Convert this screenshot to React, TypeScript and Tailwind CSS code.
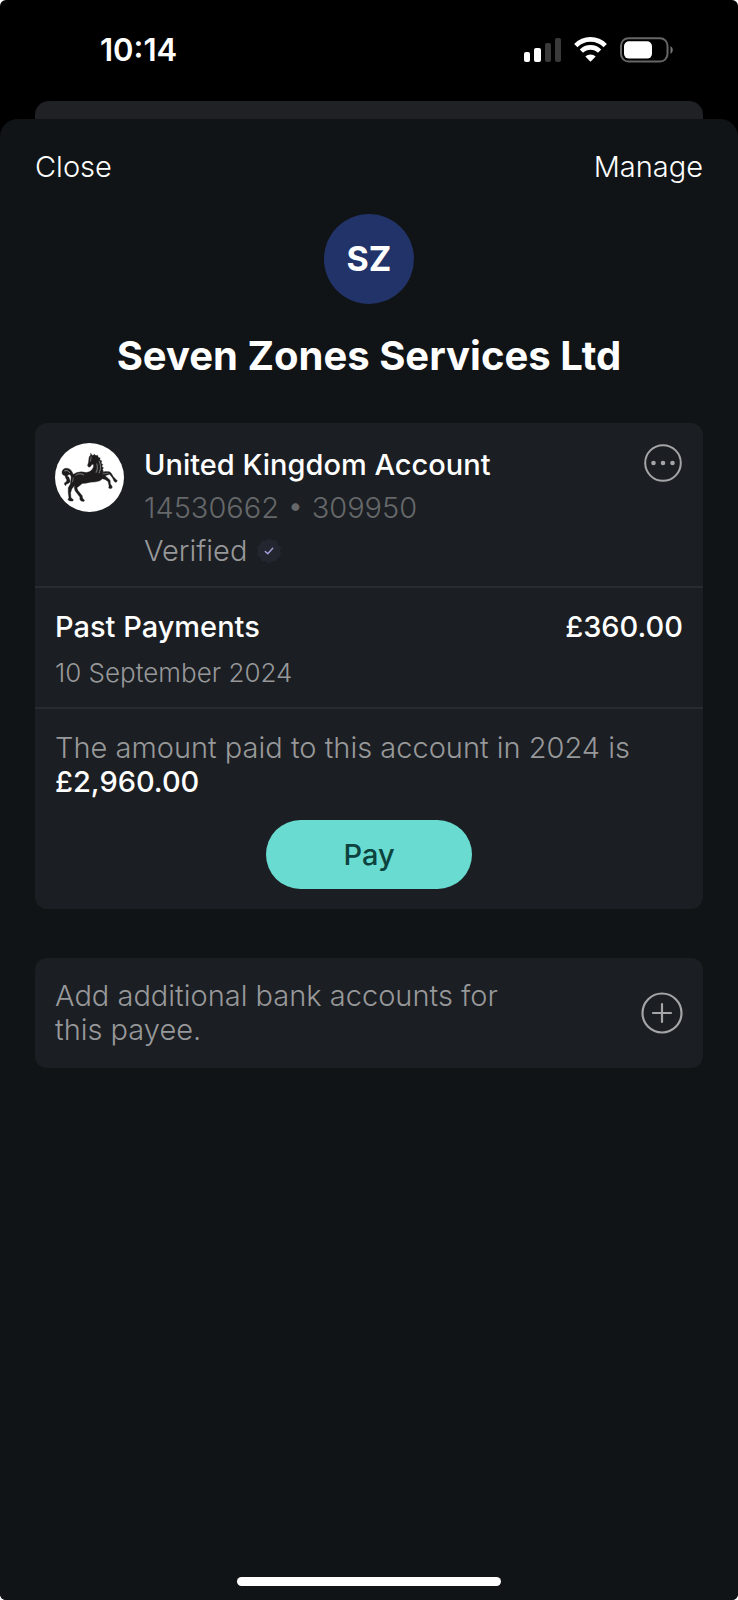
import React from "react";

function StatusIcons() {
  return (
    <svg viewBox="0 0 152 26" className="h-[26px] w-[152px]" aria-hidden="true">
      <rect x="1" y="15" width="6" height="10" rx="2" fill="#fff" />
      <rect x="11" y="11" width="7" height="14" rx="2" fill="#fff" />
      <rect x="22" y="6" width="6" height="19" rx="2" fill="#3a3a3a" />
      <rect x="32" y="1" width="6" height="24" rx="2" fill="#3a3a3a" />
      <g fill="none" stroke="#fff" strokeWidth="4.6">
        <path d="M52.8 8.6 A20.5 20.5 0 0 1 82.2 8.6" />
        <path d="M58.4 14.2 A12.8 12.8 0 0 1 76.6 14.2" />
      </g>
      <path d="M67.5 24.8 L62.3 19.6 A7.4 7.4 0 0 1 72.7 19.6 Z" fill="#fff" />
      <rect x="98" y="1.2" width="46.5" height="23.4" rx="7.5" fill="none" stroke="#666" strokeWidth="2" />
      <rect x="101" y="4.2" width="28" height="17.4" rx="5" fill="#fff" />
      <path d="M147.5 9 a4.6 4.6 0 0 1 0 8 z" fill="#777" />
    </svg>
  );
}

function HorseLogo() {
  return (
    <svg viewBox="15 23 208 208" className="size-[69px] shrink-0" role="img" aria-label="Black horse">
      <circle cx="119" cy="127" r="104" fill="#fff" />
      <g fill="#1d1b1c" stroke="#1d1b1c" strokeLinejoin="round" strokeLinecap="round" strokeWidth="1.2">
        <path d="M123 54 L126 59 L129 61 L134 57 L138 61 L144 61 L145 66 L151 68 L150 74 L156 77 L154 83 L159 88 L156 93 L161 98 L158 103 L161 108 L158 112 L166 109 L180 110 L185 115 L191 125 L198 132 L203 137 L199 142 L193 138 L189 129 L180 117 L166 122 L173 128 L181 135 L182 146 L188 156 L184 161 L177 159 L178 152 L175 139 L166 133 L158 131 L150 137 L138 140 L122 141 L108 144 L97 145 L90 151 L81 158 L84 166 L97 182 L98 189 L104 196 L102 199 L94 198 L90 193 L90 186 L76 168 L73 158 L74 151 L66 161 L62 173 L63 187 L70 194 L69 198 L60 198 L54 194 L57 188 L55 173 L55 158 L61 147 L63 135 L64 124 L71 117 L81 112 L94 110 L110 112 L120 109 L127 103 L131 95 L131 87 L126 88 L122 94 L117 96 L113 91 L116 82 L117 73 L118 65 L122 60 Z" />
        <path d="M71 120 C67 110 64 104 58 101 C50 98 42 99 38 105 C34 111 36 119 43 121 C47 122 46 127 48 130 C52 134 51 139 47 141 C42 143 42 147 47 152 C47 145 57 147 60 140 C62 133 56 130 57 125 C51 127 51 121 57 118 C61 117 63 122 66 128 Z" />
      </g>
      <g fill="none" stroke="#8b8b8b" strokeWidth="3" strokeLinecap="round">
        <path d="M148 78 C153 88 154 101 148 113" />
        <path d="M141 86 C144 95 144 103 139 111" strokeWidth="4" stroke="#666" />
        <path d="M78 120 C84 115 94 114 101 119" />
        <path d="M44 107 C50 104 56 107 59 112" />
        <path d="M124 65 L122 78" stroke="#777" />
        <path d="M160 116 L175 114" stroke="#666" />
        <path d="M70 128 L68 140" stroke="#666" />
      </g>
    </svg>
  );
}

function VerifiedBadge() {
  return (
    <svg viewBox="0 0 28 28" className="size-7" aria-hidden="true">
      <path
        fill="#23252f"
        d="M14 1 L17.4 3.6 L21.6 3.5 L22.8 7.5 L26.3 10 L25 14 L26.3 18 L22.8 20.5 L21.6 24.5 L17.4 24.4 L14 27 L10.6 24.4 L6.4 24.5 L5.2 20.5 L1.7 18 L3 14 L1.7 10 L5.2 7.5 L6.4 3.5 L10.6 3.6 Z"
      />
      <path d="M10.3 14.4 L12.8 16.8 L17.7 11.2" fill="none" stroke="#a3a0dc" strokeWidth="1.4" strokeLinecap="round" strokeLinejoin="round" />
    </svg>
  );
}

export default function App() {
  return (
    <div className="min-h-screen bg-white font-['Inter','Liberation_Sans',sans-serif]">
      <div className="flex min-h-screen flex-col overflow-hidden rounded-md bg-black">
        <header className="flex h-[101px] shrink-0 items-center justify-between pr-[63px] pb-px pl-[100px] text-[31px] leading-9 font-semibold text-white">
          <time>10:14</time>
          <StatusIcons />
        </header>
        <div className="mx-[35px] h-[18px] shrink-0 rounded-t-[14px] bg-[#202124]" />

        <main className="flex grow flex-col rounded-t-[18px] bg-[#111416] px-[35px] text-[29px] leading-[34px] text-white">
          <nav className="flex justify-between pt-[31px] font-light">
            <button type="button">Close</button>
            <button type="button">Manage</button>
          </nav>

          <div className="mt-[30px] flex size-[90px] items-center justify-center self-center rounded-full bg-[#213368] text-[34px] font-bold">
            SZ
          </div>
          <h1 className="mt-7 text-center text-[40px] leading-[48px] font-bold">Seven Zones Services Ltd</h1>

          <section className="mt-[43px] rounded-xl bg-[#1b1e22]">
            <div className="flex items-start px-5 pt-5 pb-[14px]">
              <HorseLogo />
              <div className="ml-5 grow leading-[43px]">
                <h2 className="font-medium">United Kingdom Account</h2>
                <p className="font-light text-[#66686a]">14530662 • 309950</p>
                <p className="flex items-center gap-2 font-light text-[#97989a]">
                  Verified <VerifiedBadge />
                </p>
              </div>
              <button type="button" aria-label="Account options">
                <svg viewBox="0 0 40 40" className="size-10" fill="#a4a5a7">
                  <circle cx="20" cy="20" r="17.8" fill="none" stroke="#a4a5a7" strokeWidth="2" />
                  <circle cx="10.5" cy="20" r="2.3" />
                  <circle cx="20" cy="20" r="2.3" />
                  <circle cx="29.5" cy="20" r="2.3" />
                </svg>
              </button>
            </div>

            <div className="border-t-2 border-[#282b2f] px-5 pt-[22px] pb-[17px]">
              <div className="flex justify-between font-medium">
                <h3>Past Payments</h3>
                <span>£360.00</span>
              </div>
              <p className="mt-3 text-[26px] font-light text-[#97989a]">10 September 2024</p>
            </div>

            <div className="flex flex-col border-t-2 border-[#282b2f] px-5 pt-[22px] pb-5">
              <p className="font-light text-[#97989a]">
                The amount paid to this account in 2024 is{" "}
                <strong className="font-medium text-white">£2,960.00</strong>
              </p>
              <button type="button" className="mt-[21px] h-[69px] w-[206px] self-center rounded-full bg-[#69dbd0] font-medium text-[#0c433e]">
                Pay
              </button>
            </div>
          </section>

          <section className="mt-[49px] flex items-center justify-between rounded-xl bg-[#1b1e22] px-5 py-[21px]">
            <p className="w-[460px] font-light text-[#97989a]">Add additional bank accounts for this payee.</p>
            <button type="button" aria-label="Add bank account">
              <svg viewBox="0 0 42 42" className="size-[42px]" fill="none" stroke="#a4a5a7" strokeWidth="2.2" strokeLinecap="round">
                <circle cx="21" cy="21" r="19.5" />
                <path d="M21 12 V30 M12 21 H30" />
              </svg>
            </button>
          </section>

          <div className="mt-auto mb-[14px] h-[9px] w-[264px] self-center rounded-full bg-white" />
        </main>
      </div>
    </div>
  );
}
